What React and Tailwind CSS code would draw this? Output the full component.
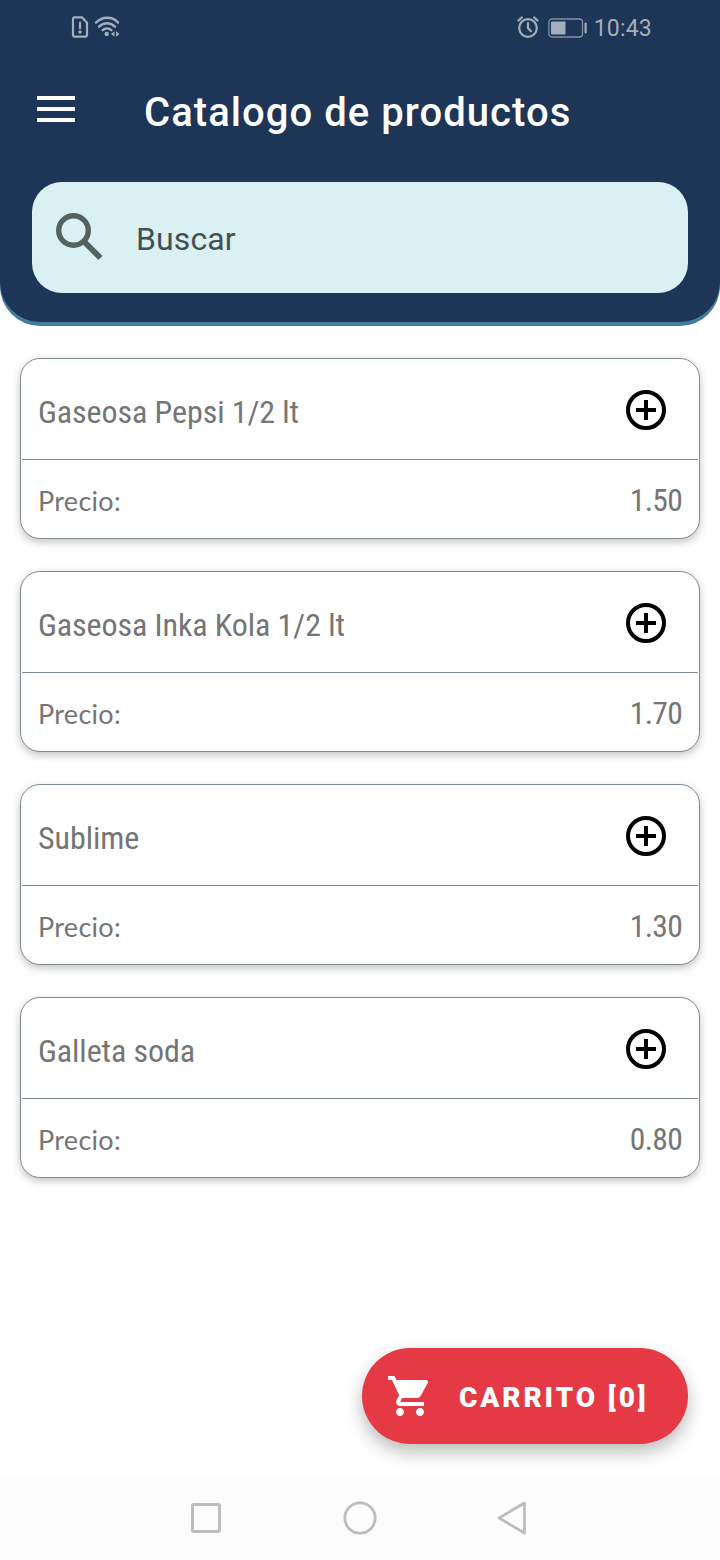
import React from "react";

const products = [
  { name: "Gaseosa Pepsi 1/2 lt", price: "1.50" },
  { name: "Gaseosa Inka Kola 1/2 lt", price: "1.70" },
  { name: "Sublime", price: "1.30" },
  { name: "Galleta soda", price: "0.80" },
];

function StatusBar() {
  return (
    <div className="flex h-14 items-center justify-between pr-[68px] pl-[71px] text-[#a5aebc]">
      <div className="flex items-center gap-[5px]">
        <svg width="18" height="22" viewBox="0 0 18 22" fill="none" className="-mt-[3px]">
          <path d="M3.5 1.3H11L16 6.8V18.7Q16 20.7 14 20.7H4Q2 20.7 2 18.7V3.3Q2 1.3 3.5 1.3Z" stroke="currentColor" strokeWidth="2.2" />
          <path d="M9 6.5V12.5" stroke="currentColor" strokeWidth="2.2" strokeLinecap="round" />
          <circle cx="9" cy="16" r="1.7" fill="currentColor" />
        </svg>
        <svg width="28" height="22" viewBox="0 0 28 22" fill="none" stroke="currentColor" strokeWidth="2.4" strokeLinecap="round" className="-mt-[3px]">
          <path d="M2 6.6C8.5 .1 18.5 .1 24 6.6" />
          <path d="M5 10.7C9.5 6 16.5 6 21 10.7" />
          <path d="M8.6 14.2C11.2 11.8 14.8 11.8 17.4 14.2" />
          <circle cx="12.7" cy="18" r="2.2" fill="currentColor" stroke="none" />
          <path d="M20.5 15.3V20.7L17 18ZM22 15.3V20.7L25.5 18Z" fill="currentColor" stroke="none" />
        </svg>
      </div>
      <div className="flex items-center">
        <svg width="22" height="22" viewBox="0 0 22 22" fill="none" stroke="currentColor" strokeWidth="2.2" strokeLinecap="round" className="-mt-0.5">
          <circle cx="11" cy="12" r="8.8" />
          <path d="M1.5 4.5L4.8 1.5M20.5 4.5L17.2 1.5M11 7.2V12L14 15.2" />
        </svg>
        <svg width="39" height="20" viewBox="0 0 39 20" fill="none" className="ml-[9px]">
          <rect x=".9" y="1" width="33.6" height="18" rx="3" stroke="currentColor" strokeWidth="1.3" strokeOpacity=".75" />
          <rect x="3" y="3.5" width="14.5" height="13" rx=".8" fill="currentColor" />
          <path d="M37.6 5.5V14.5" stroke="currentColor" strokeWidth="2.2" strokeLinecap="round" />
        </svg>
        <span className="mt-px ml-[7px] text-[23px] leading-6 tracking-[0.2px]">10:43</span>
      </div>
    </div>
  );
}

function ProductCard({ name, price }) {
  return (
    <article className="flex h-[181px] flex-col rounded-[20px] border border-[#7f8b93] bg-white px-px text-[#757575] shadow-[0_3px_9px_rgba(0,0,0,0.24)]">
      <div className="flex h-[101px] items-center justify-between border-b border-[#7f8b93] pr-[28px] pl-4">
        <h2 className="mt-1.5 text-[32px] leading-10 tracking-[-0.07px] whitespace-nowrap [font-stretch:75%]">{name}</h2>
        <button aria-label="Agregar" className="mt-0.5 flex size-12 items-center justify-center text-black">
          <svg width="40" height="40" viewBox="0 0 40 40" fill="none" stroke="currentColor" strokeWidth="4">
            <circle cx="20" cy="20" r="18" />
            <path d="M10 20H30M20 10V30" />
          </svg>
        </button>
      </div>
      <div className="flex h-[78px] items-center justify-between px-4">
        <span className="mt-1 font-[Lato] text-[27px] leading-8 tracking-[0.3px]">Precio:</span>
        <span className="mt-1 text-[31.5px] leading-9 tracking-[-0.7px] [font-stretch:85%]">{price}</span>
      </div>
    </article>
  );
}

export default function App() {
  return (
    <div className="flex h-[1560px] w-[720px] flex-col bg-white font-[Roboto,sans-serif]">
      <header className="h-[326px] rounded-b-[40px] bg-[#457b9d] pb-1">
        <div className="h-[322px] rounded-b-[40px] bg-[#1d3557]">
          <StatusBar />
          <div className="flex h-[126px] items-start pt-8 pl-[37px] text-white">
            <button aria-label="Menu" className="mt-2">
              <svg width="38" height="26" viewBox="0 0 38 26" fill="currentColor">
                <path d="M0 0H38V4H0ZM0 11H38V15H0ZM0 22H38V26H0Z" />
              </svg>
            </button>
            <h1 className="mt-px ml-[69px] text-[40px] leading-[48px] font-medium tracking-[1.05px] whitespace-nowrap">Catalogo de productos</h1>
          </div>
          <div className="mx-8 flex h-[111px] items-center rounded-[30px] bg-[#daf1f3] pl-6">
            <svg width="47" height="48" viewBox="0 0 47 48" fill="none" stroke="#566260" className="-mt-0.5">
              <circle cx="17.5" cy="17.5" r="14.8" strokeWidth="5.4" />
              <path d="M28 28.5L44.5 45" strokeWidth="5.8" />
            </svg>
            <span className="mt-0.5 ml-[33px] text-[32px] leading-10 tracking-[0.1px] text-[#444f51]">Buscar</span>
          </div>
        </div>
      </header>

      <main className="flex flex-1 flex-col gap-8 px-5 pt-8">
        {products.map((p) => (
          <ProductCard key={p.name} name={p.name} price={p.price} />
        ))}
      </main>

      <div className="flex h-32 shrink-0 justify-end pr-8">
        <button className="flex h-24 w-[326px] items-center rounded-full bg-[#e63946] pl-[26px] text-white shadow-[0_8px_18px_rgba(0,0,0,0.27)]">
          <svg width="40" height="40" viewBox="1 2 20 20" fill="currentColor">
            <path d="M7 18c-1.1 0-1.99.9-1.99 2S5.9 22 7 22s2-.9 2-2-.9-2-2-2zM1 2v2h2l3.6 7.59-1.35 2.45c-.16.28-.25.61-.25.96 0 1.1.9 2 2 2h12v-2H7.42c-.14 0-.25-.11-.25-.25l.03-.12.9-1.63h7.45c.75 0 1.41-.41 1.75-1.03l3.58-6.49A1 1 0 0 0 20.01 4H5.21l-.94-2H1zm16 16c-1.1 0-1.99.9-1.99 2s.89 2 1.99 2 2-.9 2-2-.9-2-2-2z" />
          </svg>
          <span className="mt-[3px] ml-[31px] text-[28px] leading-8 font-black tracking-[2.9px] whitespace-nowrap">CARRITO [0]</span>
        </button>
      </div>

      <nav className="flex h-[84px] shrink-0 items-center justify-center gap-[121px] bg-[#fcfcfc] pr-[3px] text-[#bdbdbd]">
        <svg width="32" height="32" viewBox="0 0 32 32" fill="none" stroke="currentColor" strokeWidth="3">
          <rect x="2.5" y="2.5" width="27" height="27" rx="1.5" />
        </svg>
        <svg width="34" height="34" viewBox="0 0 34 34" fill="none" stroke="currentColor" strokeWidth="2.8">
          <circle cx="17" cy="17" r="15.2" />
        </svg>
        <svg width="30" height="34" viewBox="0 0 30 34" fill="none" stroke="currentColor" strokeWidth="2.8" strokeLinejoin="round" className="-ml-px">
          <path d="M2 17L27.5 2V32Z" />
        </svg>
      </nav>
    </div>
  );
}
